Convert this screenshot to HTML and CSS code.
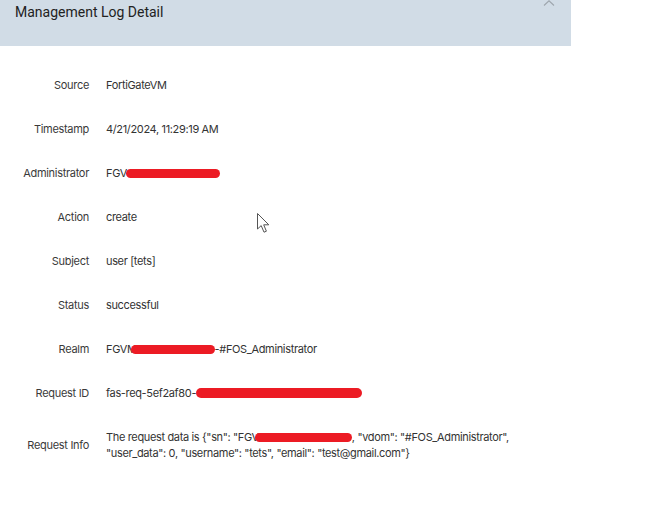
FILE: index.html
```html
<!DOCTYPE html>
<html lang="en">
<head>
	<meta charset="UTF-8">
	<title>Management Log Detail</title>
<link rel="stylesheet" href="styles.css">
</head>
<body>
	<div class='log-detail'>
		<div class='detail-hd'>
			<div class='title'>Management Log Detail</div>
			<div class='collapse-up'>
				<svg width='12' height='6' viewBox='0 0 12 6'><path d='M1 5.5 L6 0.8 L11 5.5' fill='none' stroke='#9ea6ad' stroke-width='1.1'/></svg>
			</div>
		</div>
		<div class='detail-mn'>
			<div class='row'>
				<div class='label'>Source</div>
				<div class='value'>FortiGateVM</div>
			</div>
			<div class='row'>
				<div class='label'>Timestamp</div>
				<div class='value'>4/21/2024, 11:29:19 AM</div>
			</div>
			<div class='row'>
				<div class='label'>Administrator</div>
				<div class='value'>FGV<span class='redact r-admin'></span></div>
			</div>
			<div class='row'>
				<div class='label'>Action</div>
				<div class='value'>create</div>
			</div>
			<div class='row'>
				<div class='label'>Subject</div>
				<div class='value'>user [tets]</div>
			</div>
			<div class='row'>
				<div class='label'>Status</div>
				<div class='value'>successful</div>
			</div>
			<div class='row'>
				<div class='label'>Realm</div>
				<div class='value'>FGVM<span class='redact r-realm'></span>-#FOS_Administrator</div>
			</div>
			<div class='row'>
				<div class='label'>Request ID</div>
				<div class='value'>fas-req-5ef2af80-<span class='redact r-reqid'></span></div>
			</div>
			<div class='row'>
				<div class='label'>Request Info</div>
				<div class='value'>The request data is {"sn": "FGV<span class='redact r-sn'></span>, "vdom": "#FOS_Administrator", "user_data": 0, "username": "tets", "email": "test@gmail.com"}</div>
			</div>
		</div>
	</div>
	<!-- mouse pointer left in the screenshot -->
	<svg class='pointer' width='14' height='21' viewBox='0 0 14 21'><path d='M0.5 0.5 L0.5 16 L4.2 12.6 L7 19.2 L9.4 18.2 L6.7 11.8 L11.8 11.8 Z' fill='#fff' stroke='#555' stroke-width='1'/></svg>
</body>
</html>
```

FILE: styles.css
```css
body{
	margin:0;
	background:#fff;
	font-family: Inter, "Noto Sans", sans-serif;
}
.log-detail{
	width:571px;
	--row-lh:16px;
}
.detail-hd{
	display:flex;
	justify-content: space-between;
	height:46px;
	padding:0 16px 0 15px;
	box-sizing: border-box;
	background-color:#d1dce6;
}
.detail-hd .title{
	padding-top:3px;
	font-family: Roboto, "Liberation Sans", sans-serif;
	font-size:14px;
	line-height:18px;
	color:#222;
}
.detail-hd .collapse-up svg{
	display:block;
}
.detail-mn{
	padding-top:17px;
	font-size:11px;
	letter-spacing:-0.35px;
}
.row{
	display:grid;
	grid-template-columns: 89px 420px;
	column-gap:17px;
	align-items:center;
	padding:14px 0;
	line-height: var(--row-lh);
}
.row .label{
	text-align:right;
	letter-spacing:-0.3px;
	color:#3a3a3a;
}
.row .value{
	color:#333;
}
/* red marker strokes hiding serials */
.redact{
	display:inline-block;
	height:9px;
	border-radius:5px;
	vertical-align:-1px;
	background-color:#ec1b24;
}
.r-admin{ width:94px; margin-left:-1px; }
.r-realm{ width:84px; margin-left:-6px; }
.r-reqid{ width:166px; height:10px; }
.r-sn{ width:97px; margin-left:-4px; }

.pointer{
	position:absolute;
	left:257px;
	top:213px;
}
```
